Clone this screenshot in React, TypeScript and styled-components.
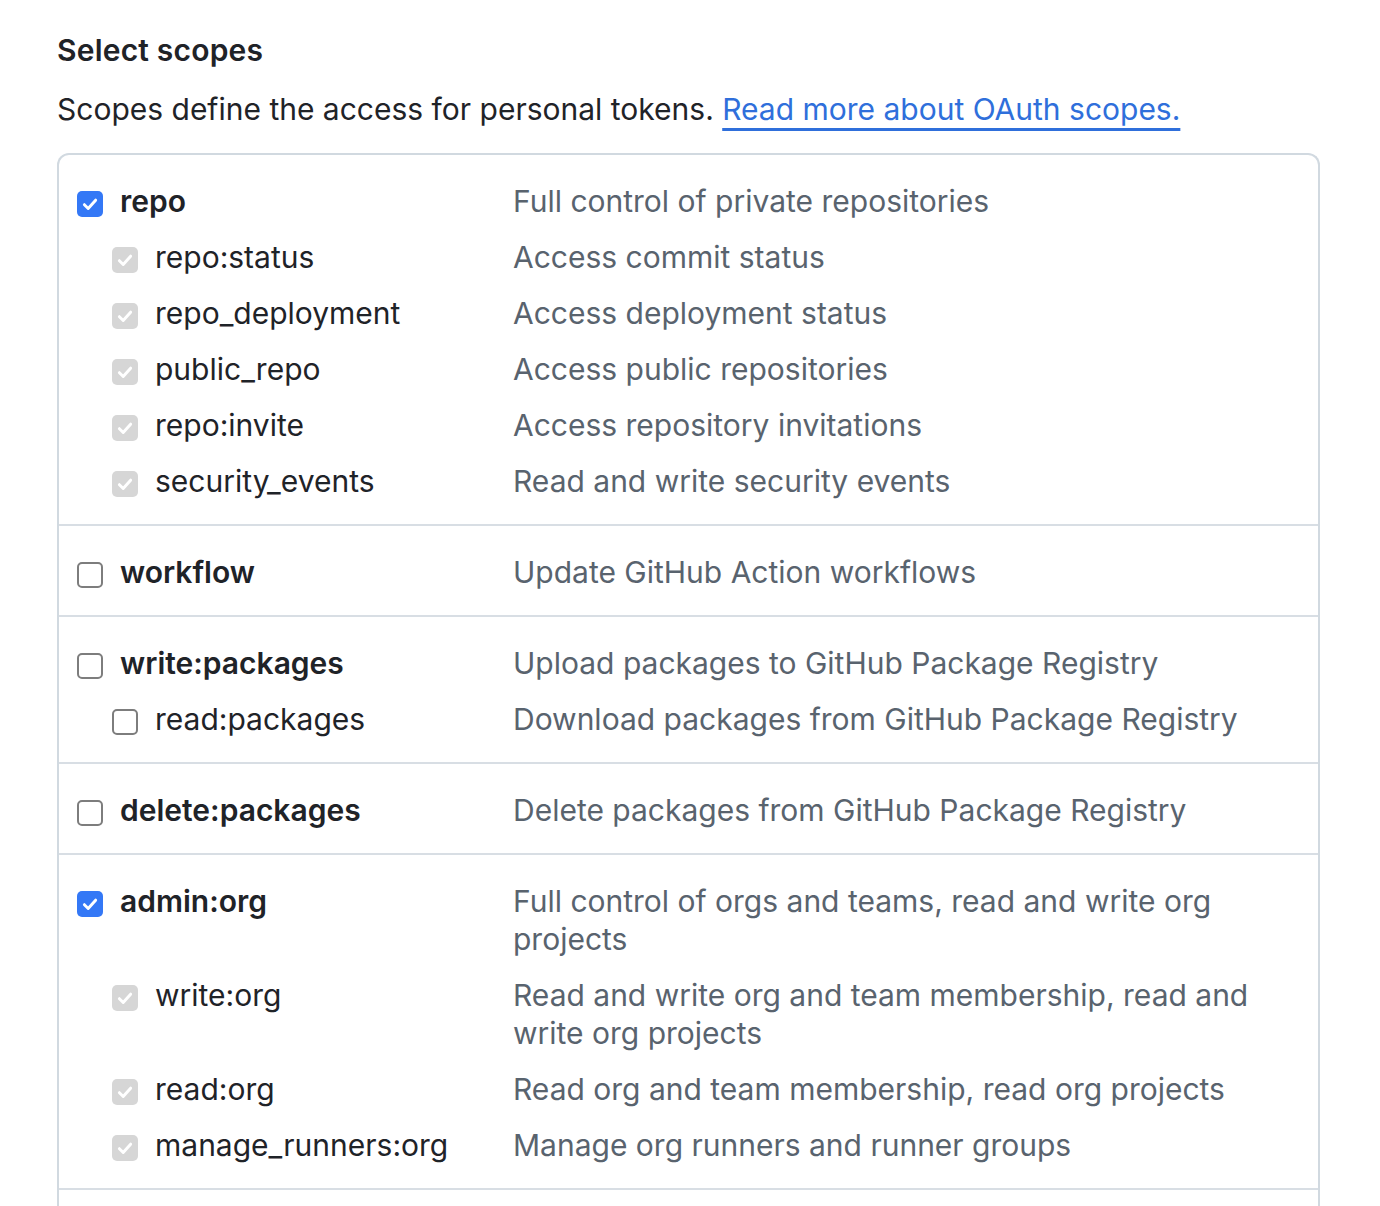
import React from "react";
import styled, { createGlobalStyle } from "styled-components";

const Global = createGlobalStyle`
  html, body { margin: 0; padding: 0; background: #ffffff; }
  body {
    font-family: Inter, "Noto Sans", "Liberation Sans", sans-serif;
    color: #1f2328;
    -webkit-font-smoothing: antialiased;
  }
`;

const Page = styled.div`
  padding: 31px 61px 0 57px;
`;

const Heading = styled.h3`
  margin: 0;
  font-size: 30px;
  line-height: 38px;
  font-weight: 600;
  letter-spacing: 0.2px;
  color: #1f2328;
`;

const Note = styled.p`
  margin: 21px 0 0;
  font-size: 30px;
  line-height: 38px;
  color: #1f2328;
`;

const Link = styled.a`
  color: #2f6fdb;
  text-decoration: underline;
  text-decoration-thickness: 3px;
  text-underline-offset: 8px;
`;

const Box = styled.div`
  margin-top: 25px;
  border: 2px solid #d1d9e0;
  border-bottom: none;
  border-radius: 12px 12px 0 0;
  width: 1259px;
`;

const Group = styled.div`
  padding: 27px 0 24px;
  display: flex;
  flex-direction: column;
  gap: 18px;
  & + & {
    border-top: 2px solid #d8dee4;
  }
`;

const Row = styled.div`
  display: grid;
  grid-template-columns: 454px 1fr;
  padding-right: 40px;
`;

const LabelCell = styled.label<{ $nested?: boolean }>`
  display: flex;
  align-items: flex-start;
  gap: 17px;
  padding-left: ${(p) => (p.$nested ? 53 : 18)}px;
  font-size: 30px;
  line-height: 38px;
  color: #1f2328;
  font-weight: ${(p) => (p.$nested ? 400 : 600)};
`;

const Desc = styled.div`
  font-size: 30px;
  line-height: 38px;
  color: #59636e;
`;

type BoxState = "checked" | "disabled" | "empty";

const Check = styled.span<{ $state: BoxState }>`
  flex: none;
  width: 26px;
  height: 26px;
  margin-top: 9px;
  box-sizing: border-box;
  border-radius: 5px;
  display: flex;
  align-items: center;
  justify-content: center;
  background: ${(p) =>
    p.$state === "checked" ? "#3478f6" : p.$state === "disabled" ? "#d6d6d6" : "#ffffff"};
  border: ${(p) => (p.$state === "empty" ? "2px solid #7d7d7d" : "none")};
`;

const CheckBox = ({ state }: { state: BoxState }) => (
  <Check $state={state}>
    {state !== "empty" && (
      <svg width="18" height="18" viewBox="0 0 16 16">
        <path
          d="M3 8.6 L6.4 12 L13 4.6"
          fill="none"
          stroke="#ffffff"
          strokeWidth="2.6"
          strokeLinecap="round"
          strokeLinejoin="round"
        />
      </svg>
    )}
  </Check>
);

type Scope = { name: string; desc: string; state: BoxState; nested?: boolean };

const groups: Scope[][] = [
  [
    { name: "repo", desc: "Full control of private repositories", state: "checked" },
    { name: "repo:status", desc: "Access commit status", state: "disabled", nested: true },
    { name: "repo_deployment", desc: "Access deployment status", state: "disabled", nested: true },
    { name: "public_repo", desc: "Access public repositories", state: "disabled", nested: true },
    { name: "repo:invite", desc: "Access repository invitations", state: "disabled", nested: true },
    { name: "security_events", desc: "Read and write security events", state: "disabled", nested: true },
  ],
  [{ name: "workflow", desc: "Update GitHub Action workflows", state: "empty" }],
  [
    { name: "write:packages", desc: "Upload packages to GitHub Package Registry", state: "empty" },
    { name: "read:packages", desc: "Download packages from GitHub Package Registry", state: "empty", nested: true },
  ],
  [{ name: "delete:packages", desc: "Delete packages from GitHub Package Registry", state: "empty" }],
  [
    { name: "admin:org", desc: "Full control of orgs and teams, read and write org projects", state: "checked" },
    { name: "write:org", desc: "Read and write org and team membership, read and write org projects", state: "disabled", nested: true },
    { name: "read:org", desc: "Read org and team membership, read org projects", state: "disabled", nested: true },
    { name: "manage_runners:org", desc: "Manage org runners and runner groups", state: "disabled", nested: true },
  ],
  [],
];

export default function App() {
  return (
    <>
      <Global />
      <Page>
        <Heading>Select scopes</Heading>
        <Note>
          Scopes define the access for personal tokens. <Link href="#">Read more about OAuth scopes.</Link>
        </Note>
        <Box>
          {groups.map((g, gi) => (
            <Group key={gi}>
              {g.map((s) => (
                <Row key={s.name}>
                  <LabelCell $nested={s.nested}>
                    <CheckBox state={s.state} />
                    <span>{s.name}</span>
                  </LabelCell>
                  <Desc>{s.desc}</Desc>
                </Row>
              ))}
            </Group>
          ))}
        </Box>
      </Page>
    </>
  );
}
